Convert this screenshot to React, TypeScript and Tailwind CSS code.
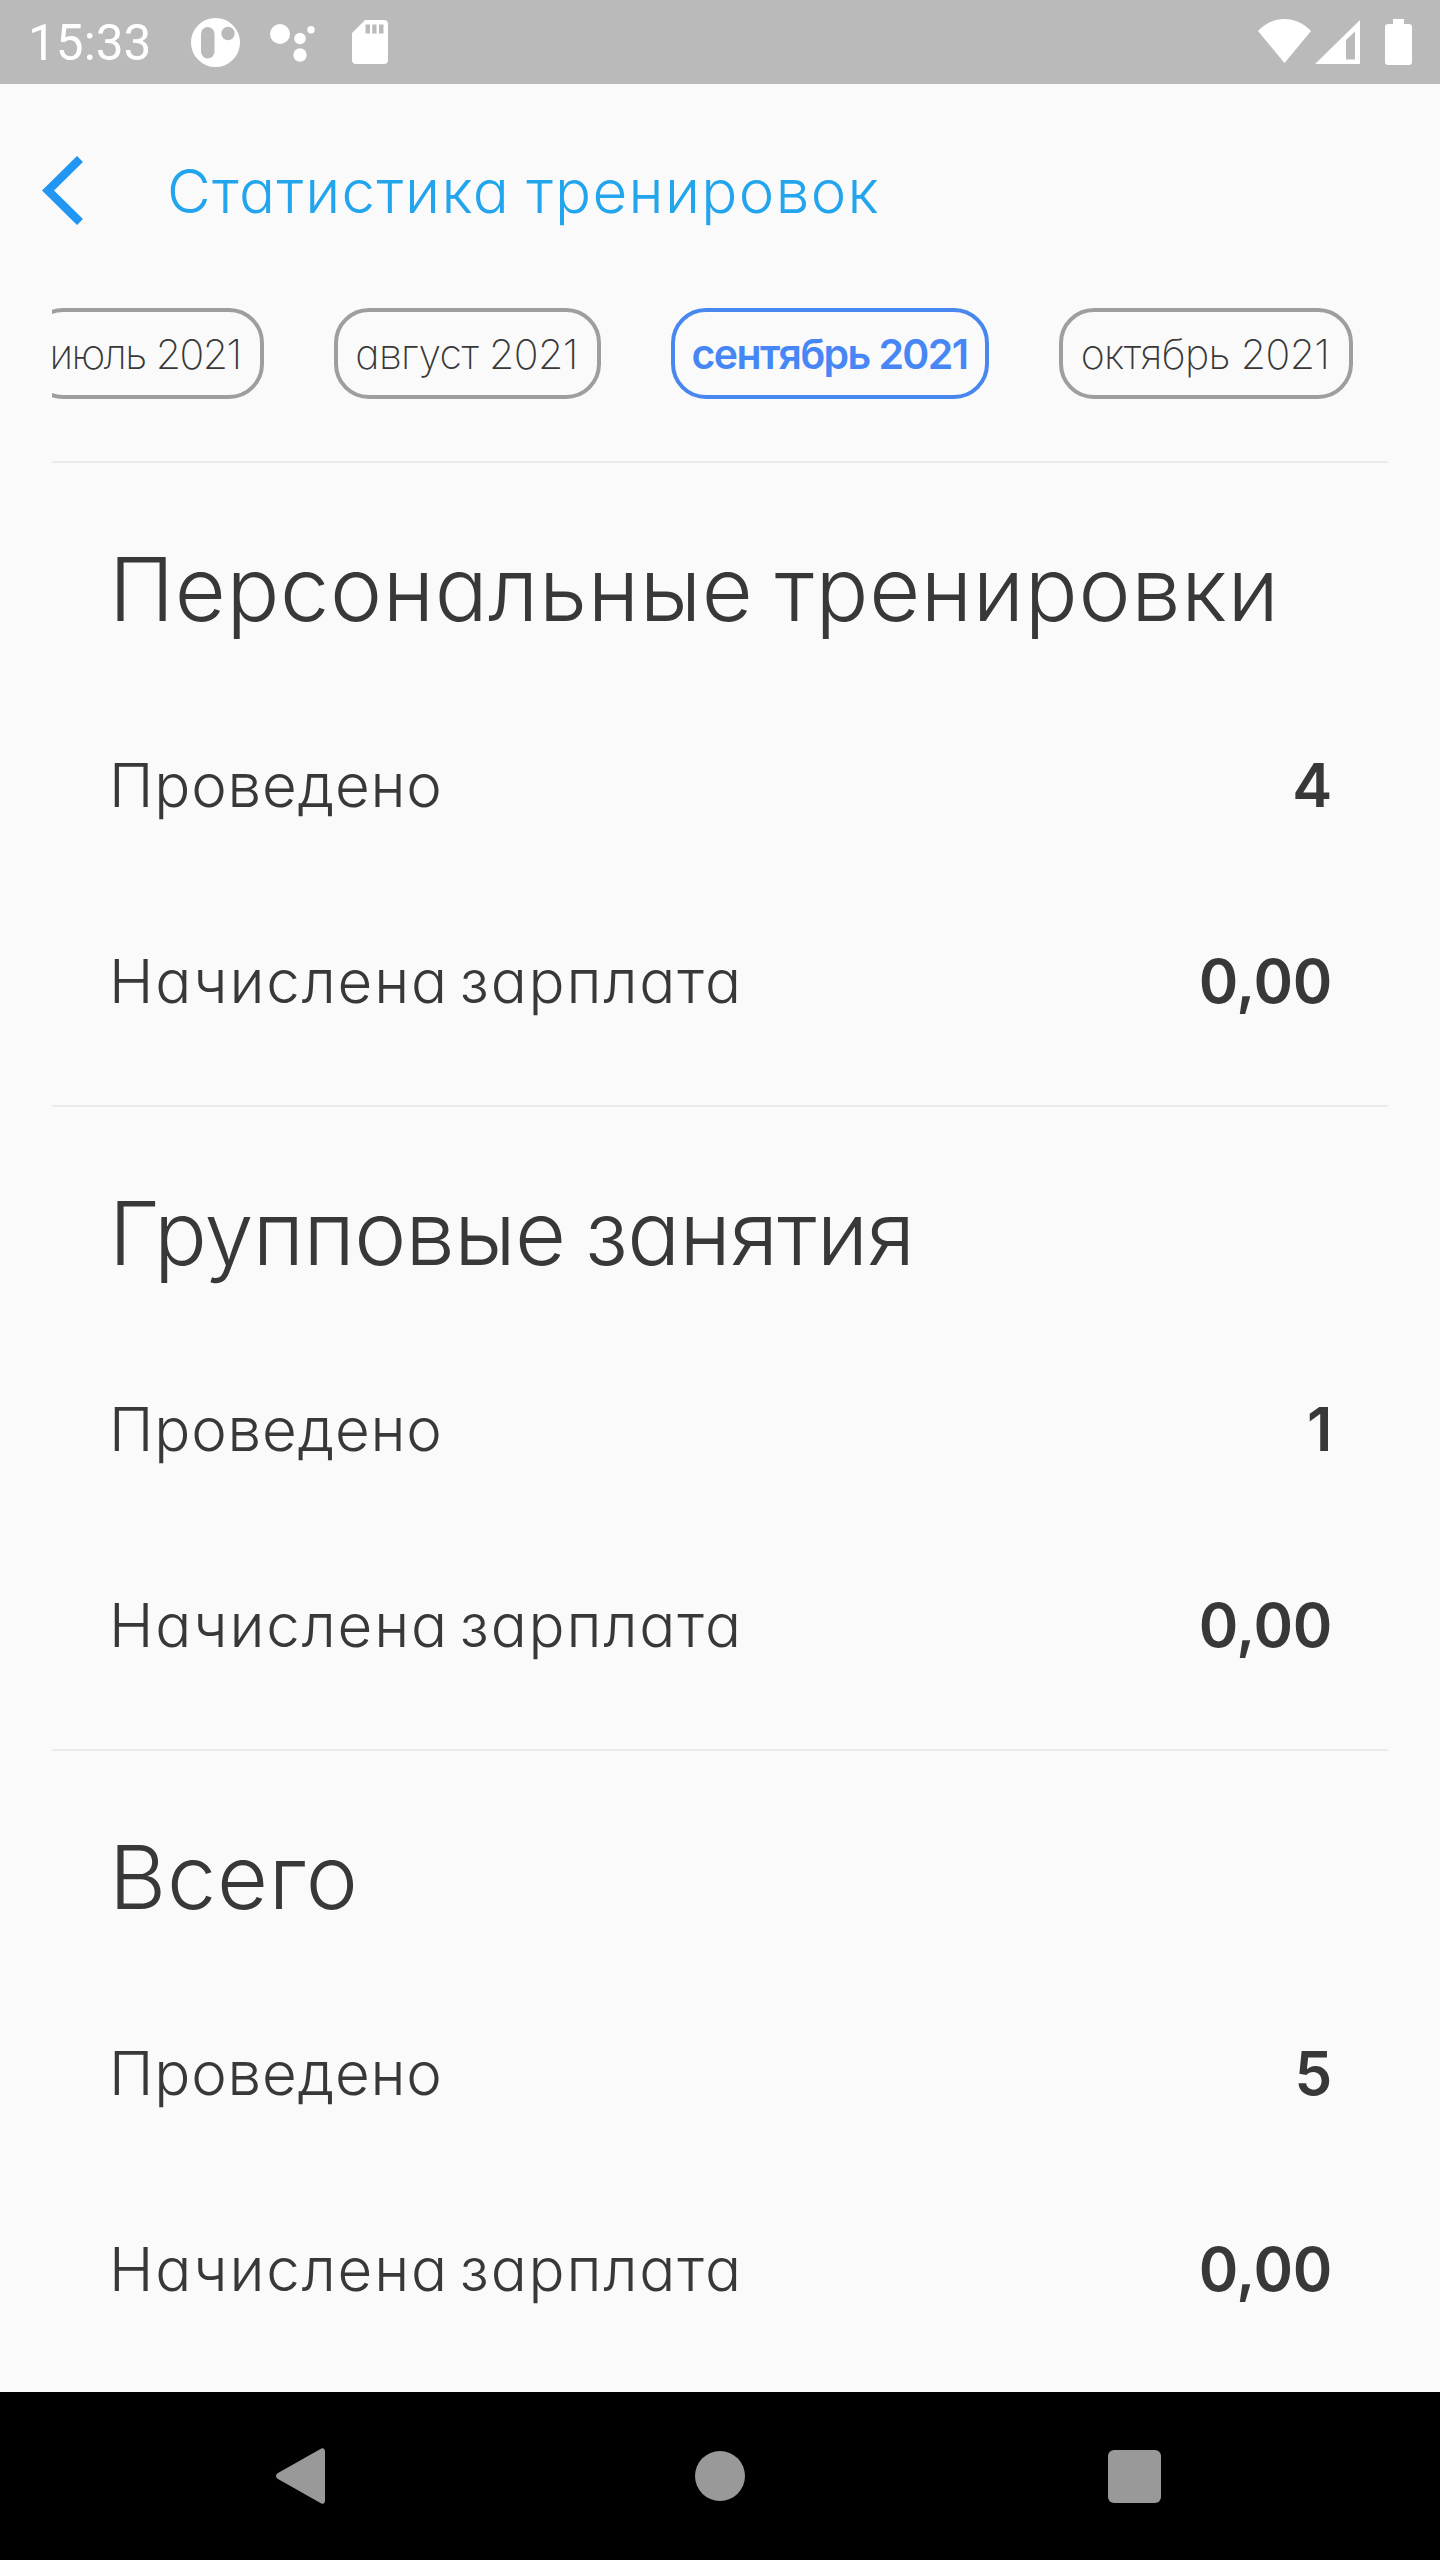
import clsx from 'clsx';

const months = [
  { label: 'июль 2021', style: '-ml-[24px] w-[236px] pr-[2px] tracking-[-1.5px]' },
  { label: 'август 2021', style: 'w-[267px] pr-[2px] tracking-[-0.6px]' },
  { label: 'сентябрь 2021', style: 'w-[318px] pr-px tracking-[-1.6px]', active: true },
  { label: 'октябрь 2021', style: 'w-[294px] pr-[2px] tracking-[-0.6px]' },
];

const sections = [
  { title: 'Персональные тренировки', tracking: 'tracking-[0.65px]', count: '4', salary: '0,00' },
  { title: 'Групповые занятия', tracking: 'tracking-[-0.7px]', count: '1', salary: '0,00' },
  { title: 'Всего', tracking: 'tracking-[0.8px]', count: '5', salary: '0,00' },
];

function StatusBar() {
  return (
    <div className="flex h-[84px] shrink-0 items-center bg-[#bababa] text-white">
      <span className="ml-[28px] w-[163px] pt-[3px] font-['Roboto'] text-[49.5px] leading-none">15:33</span>
      <svg width="49" height="49" viewBox="0 0 49 49" fill="currentColor">
        <circle cx="24.5" cy="24.5" r="24.5" />
        <rect x="10" y="9" width="13.5" height="31.5" rx="6.7" fill="#bababa" />
        <circle cx="37" cy="15.5" r="6.7" fill="#bababa" />
      </svg>
      <svg className="ml-[30px] mt-[2px]" width="45" height="38" viewBox="0 0 45 38" fill="currentColor">
        <circle cx="10" cy="10" r="10" />
        <circle cx="30" cy="14.5" r="5.8" />
        <circle cx="41" cy="5.8" r="3.7" />
        <circle cx="30" cy="31" r="6.7" />
      </svg>
      <svg className="ml-[37px]" width="36" height="44" viewBox="0 0 36 44" fill="currentColor">
        <path fillRule="evenodd" d="M13 0h19a4 4 0 0 1 4 4v36a4 4 0 0 1-4 4H4a4 4 0 0 1-4-4V13zM13.500 4.500v9H18v-9zM20.300 4.500v9h4.200v-9zM27 4.500v9h4.500v-9z" />
      </svg>
      <div className="ml-auto mr-[28px] flex items-center">
        <svg className="-mt-[2px]" width="53" height="44" viewBox="0 0 53 44" fill="currentColor">
          <path d="M0 12C15-4 38-4 53 12L26.500 44z" />
        </svg>
        <svg className="-mt-px ml-[4px]" width="45" height="44" viewBox="0 0 45 44" fill="currentColor">
          <path fillRule="evenodd" d="M45 0v44H0zM40 11.500L31 20v19.500h9z" />
        </svg>
        <svg className="ml-[25px]" width="27" height="46" viewBox="0 0 27 46" fill="currentColor">
          <path d="M8 0h11v5h5a3 3 0 0 1 3 3v35a3 3 0 0 1-3 3H3a3 3 0 0 1-3-3V8a3 3 0 0 1 3-3h5z" />
        </svg>
      </div>
    </div>
  );
}

function Row({ label, value, tracking }: { label: string; value: string; tracking: string }) {
  return (
    <div className="flex h-[196px] items-center justify-between pl-[57px] pr-[56px] text-[60px]">
      <span className={clsx('font-light [word-spacing:-8px]', tracking)}>{label}</span>
      <span className="font-semibold tracking-[-0.3px]">{value}</span>
    </div>
  );
}

export default function App() {
  return (
    <div className="flex h-[2560px] w-[1440px] flex-col bg-[#fafafa] font-['Inter',sans-serif] text-[#383838] [font-feature-settings:'cv11']">
      <StatusBar />

      <header className="flex h-[212px] shrink-0 items-center pl-[42px]">
        <svg width="41" height="69" viewBox="0 0 41 69" fill="none" stroke="#2196f3" strokeWidth="8.5">
          <path d="M38 3L6 34.500L38 66" />
        </svg>
        <h1 className="ml-[84px] pt-[2px] text-[60px] font-light tracking-[1.35px] text-[#22a5ec] [word-spacing:-2px]">
          Статистика тренировок
        </h1>
      </header>

      <main className="flex-1 px-[52px]">
        {/* Month picker */}
        <div className="flex h-[165px] gap-[70px] overflow-hidden pt-[12px]">
          {months.map((month) => (
            <button
              key={month.label}
              className={clsx(
                'flex h-[91px] shrink-0 items-center justify-center whitespace-nowrap rounded-[35px] border-4 pt-[2px] text-[41px]',
                month.style,
                month.active ? 'border-[#4787ee] font-semibold text-[#4787f5]' : 'border-[#9e9e9e] font-extralight',
              )}
            >
              {month.label}
            </button>
          ))}
        </div>

        {sections.map((section) => (
          <section key={section.title} className="border-t-2 border-[#ebebeb] pb-[26px] pt-[26px] last:pb-[25px]">
            <h2 className={clsx('flex h-[198px] items-center pl-[57px] pt-[2px] text-[88px] font-light [word-spacing:-4px]', section.tracking)}>
              {section.title}
            </h2>
            <Row label="Проведено" value={section.count} tracking="tracking-[0.8px]" />
            <Row label="Начислена зарплата" value={section.salary} tracking="tracking-[1.85px]" />
          </section>
        ))}
      </main>

      {/* System navigation */}
      <nav className="flex h-[168px] shrink-0 items-center bg-black">
        <svg className="ml-[276px]" width="49" height="56" viewBox="0 0 49 56" fill="#999">
          <path d="M44 1.200C47 -.8 49 .5 49 3.500V52.500C49 55.500 47 56.800 44 54.800L2 31C-.7 29.500-.7 26.500 2 25z" />
        </svg>
        <div className="ml-[370px] size-[50px] rounded-full bg-[#999]" />
        <div className="ml-[363px] size-[53px] rounded-[6px] bg-[#999]" />
      </nav>
    </div>
  );
}
